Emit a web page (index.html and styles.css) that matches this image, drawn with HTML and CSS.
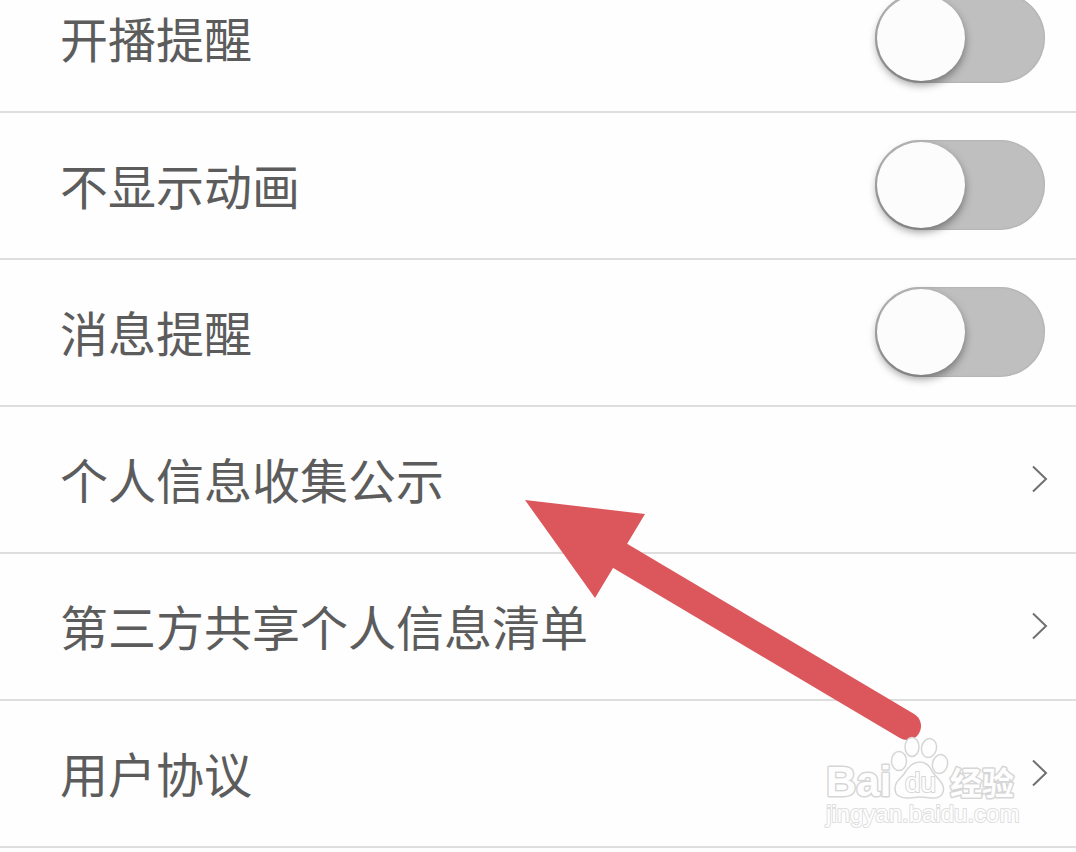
FILE: index.html
```html
<!DOCTYPE html>
<html lang="zh-CN">
<head>
<meta charset="utf-8">
<meta name="viewport" content="width=device-width, initial-scale=1">
<title>设置</title>
<link rel="stylesheet" href="styles.css">
</head>
<body>
<main class="screen">
  <ul class="settings">
    <li class="row"><label class="label" for="live">开播提醒</label><input class="switch" id="live" type="checkbox" role="switch"></li>
    <li class="row"><label class="label" for="motion">不显示动画</label><input class="switch" id="motion" type="checkbox" role="switch"></li>
    <li class="row"><label class="label" for="message">消息提醒</label><input class="switch" id="message" type="checkbox" role="switch"></li>
    <li><a class="row link" href="#collection"><span class="label">个人信息收集公示</span><svg class="chevron" viewBox="0 0 16 28" aria-hidden="true"><path d="M1 1.500 14 14 1 26.500"/></svg></a></li>
    <li><a class="row link" href="#sharing"><span class="label">第三方共享个人信息清单</span><svg class="chevron" viewBox="0 0 16 28" aria-hidden="true"><path d="M1 1.500 14 14 1 26.500"/></svg></a></li>
    <li><a class="row link" href="#agreement"><span class="label">用户协议</span><svg class="chevron" viewBox="0 0 16 28" aria-hidden="true"><path d="M1 1.500 14 14 1 26.500"/></svg></a></li>
  </ul>
  <svg class="pointer" viewBox="0 0 400 244" aria-hidden="true">
    <path class="head" d="M0 2 120 16 102 46 88 70 70 100Z"/>
    <path class="shaft" d="M92 56 382 228"/>
  </svg>
  <svg class="watermark" viewBox="0 0 200 96" role="img" aria-label="Baidu 经验">
    <text class="brand" x="3" y="61">Bai</text>
    <ellipse cx="76" cy="26" rx="7.500" ry="9.500"/>
    <ellipse cx="89" cy="12" rx="7" ry="9.500"/>
    <ellipse cx="106" cy="13" rx="7.500" ry="9.500" transform="rotate(12 106 13)"/>
    <ellipse cx="117" cy="29" rx="7.500" ry="9.500" transform="rotate(12 117 29)"/>
    <path d="M97 27C89 27 85 33 81 39 76 45 72 47 72 54 72 60 77 63 84 63 90 63 92 62 97 62 102 62 105 63 111 63 118 63 122 58 120 51 118 45 112 41 109 36 106 30 103 27 97 27Z"/>
    <text class="mark" x="82" y="57">du</text>
    <text class="cn" x="127" y="60">经验</text>
    <text class="site" x="3" y="87">jingyan.baidu.com</text>
  </svg>
</main>
</body>
</html>
```
FILE: styles.css
```css
* { box-sizing: border-box; }

body {
  margin: 0;
  background: #fefefe;
  color: #5c5c5c;
  font-family: "Noto Sans CJK SC", sans-serif;
}

.screen {
  position: relative;
  min-height: 100vh;
  overflow: hidden;
}

/* The list is scrolled so that its first row is partly out of view. */
.settings {
  list-style: none;
  margin: -34px 0 0;
  padding: 0;
}

.row {
  display: flex;
  align-items: center;
  justify-content: space-between;
  min-height: 147px;
  padding: 0 31px 2px 60px;
  border-bottom: 2px solid #dedede;
}

.link {
  padding-right: 28px;
  color: inherit;
  text-decoration: none;
}

.label {
  padding-bottom: 2px;
  font-size: 48px;
  line-height: 72px;
}

.switch {
  appearance: none;
  display: flex;
  align-items: center;
  flex: none;
  width: 170px;
  height: 90px;
  margin: 0;
  padding: 0 2px;
  border-radius: 45px;
  background: #bfbfbf;
  box-shadow: inset 0 0 2px #999;
}

.switch::before {
  content: "";
  width: 88px;
  height: 86px;
  border-radius: 50%;
  background: #fcfcfc;
  box-shadow: 0 4px 8px rgba(0, 0, 0, .4);
}

.switch:checked { justify-content: flex-end; }

.chevron {
  flex: none;
  width: 16px;
  height: 28px;
  fill: none;
  stroke: #707070;
  stroke-width: 2;
}

.pointer {
  position: absolute;
  top: 498px;
  left: 525px;
  width: 400px;
  pointer-events: none;
}

.head { fill: #dc575c; }

.shaft {
  fill: none;
  stroke: #dc575c;
  stroke-width: 28;
  stroke-linecap: round;
}

.watermark {
  position: absolute;
  top: 735px;
  left: 823px;
  width: 200px;
  overflow: visible;
  pointer-events: none;
  fill: #fefefe;
  stroke: #d6d6d6;
  stroke-width: 1.5;
}

.watermark text {
  font-family: "Liberation Sans", "Noto Sans CJK SC", sans-serif;
  paint-order: stroke;
  stroke-width: 3;
  stroke-linejoin: round;
}

.watermark .brand { font-size: 42px; font-weight: 700; }
.watermark .mark { font-size: 28px; stroke-width: 2; }
.watermark .cn { font-size: 32px; font-weight: 700; }
.watermark .site { font-size: 24px; stroke: #dedede; stroke-width: 2; }
```
